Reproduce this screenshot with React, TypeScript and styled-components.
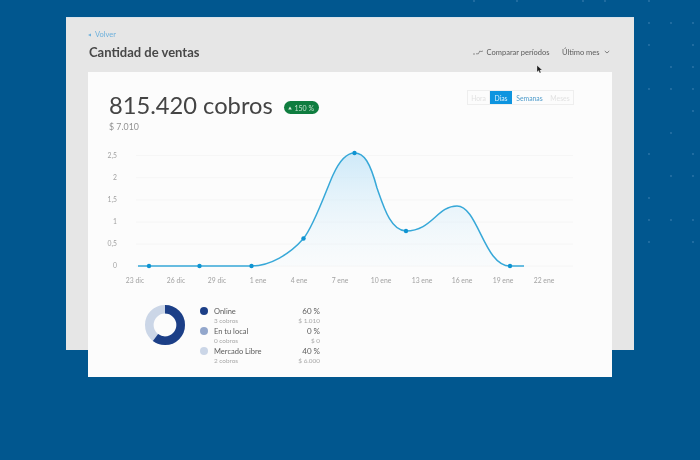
import React from "react";
import styled, { createGlobalStyle } from "styled-components";

const Global = createGlobalStyle`
  html, body { margin: 0; padding: 0; width: 700px; height: 460px; overflow: hidden; background: #01578f; }
  #root { width: 700px; height: 460px; }
  * { box-sizing: border-box; }
`;

const Page = styled.div`
  position: relative;
  width: 700px;
  height: 460px;
  background: #01578f;
  padding: 17px 66px 0;
  font-family: Lato, "Open Sans", "Liberation Sans", sans-serif;
  overflow: hidden;
  filter: blur(0.35px);
`;
const Dots = styled.svg`
  position: absolute;
  left: 0;
  top: 0;
`;
const Cursor = styled.svg`
  position: absolute;
  left: 536px;
  top: 65px;
`;
const Window = styled.div`
  position: relative;
  width: 568px;
  height: 333px;
  background: #e6e6e6;
  border-top: 1px solid #d8e2ea;
  padding: 12px 22px 0;
`;
const Back = styled.a`
  display: flex;
  align-items: center;
  gap: 4px;
  font-size: 7.5px;
  line-height: 10px;
  color: #6fb1dc;
`;
const Header = styled.div`
  display: flex;
  align-items: center;
  justify-content: space-between;
  height: 18px;
  margin-top: 3px;
  padding-left: 1px;
`;
const Title = styled.h1`
  margin: 0;
  font-size: 13px;
  font-weight: 700;
  color: #484848;
`;
const Actions = styled.div`
  display: flex;
  align-items: center;
  padding-right: 2.5px;
  font-size: 7.5px;
  color: #5c5c5c;
`;
const Compare = styled.span`
  display: flex;
  align-items: center;
  gap: 4px;
  margin-right: 12.5px;
`;
const Period = styled.span`
  display: flex;
  align-items: center;
  gap: 4px;
`;
const Card = styled.div`
  width: 524px;
  height: 305px;
  margin-top: 11px;
  background: #fcfcfc;
  padding: 19px 0 0;
`;
const TopRow = styled.div`
  display: flex;
  align-items: flex-start;
  justify-content: space-between;
  padding: 0 38px 0 21px;
`;
const Headline = styled.div`
  display: flex;
  align-items: center;
  gap: 11px;
  height: 28px;
`;
const BigNumber = styled.span`
  font-size: 23.7px;
  color: #444;
`;
const Badge = styled.span`
  display: flex;
  align-items: center;
  justify-content: center;
  gap: 2px;
  width: 35px;
  height: 13px;
  margin-top: 5px;
  border-radius: 7px;
  background: #0f7d3f;
  color: #bfe0cb;
  font-size: 7px;
`;
const Segments = styled.div`
  display: flex;
  height: 15px;
  border: 1px solid #eee;
  margin-top: -1px;
`;
const Segment = styled.span<{ $w: number; $state: "off" | "on" | "link" }>`
  width: ${(p) => p.$w}px;
  display: flex;
  align-items: center;
  justify-content: center;
  font-size: 6.8px;
  background: ${(p) => (p.$state === "on" ? "#0e94df" : "transparent")};
  color: ${(p) => (p.$state === "on" ? "#d6eefb" : p.$state === "link" ? "#4f9ccb" : "#e2e2e2")};
  border-right: ${(p) => (p.$state === "off" ? "1px solid #f0f0f0" : "0")};
  &:last-child { border-right: 0; }
`;
const Amount = styled.div`
  padding-left: 21px;
  font-size: 8.8px;
  line-height: 12px;
  margin-top: 2px;
  color: #929292;
`;
const Chart = styled.svg`
  display: block;
`;
const AxisText = styled.text`
  font-family: Lato, "Open Sans", "Liberation Sans", sans-serif;
  font-size: 6.8px;
  fill: #a2a2a2;
`;
const Summary = styled.div`
  display: flex;
  align-items: flex-start;
  padding: 15.5px 0 0 56px;
`;
const Donut = styled.svg`
  display: block;
  flex: none;
  margin-right: 14px;
`;
const Legend = styled.div`
  width: 120px;
  margin-top: 2.5px;
  display: flex;
  flex-direction: column;
  gap: 1.7px;
`;
const Row = styled.div`
  display: grid;
  grid-template-columns: 14px 1fr auto;
  grid-template-rows: 10px 8.5px;
  height: 18.5px;
  align-items: center;
`;
const Swatch = styled.span<{ $c: string }>`
  width: 8px;
  height: 8px;
  border-radius: 50%;
  background: ${(p) => p.$c};
`;
const Name = styled.span`
  font-size: 7.5px;
  color: #5c5c5c;
`;
const Pct = styled.span`
  font-size: 8px;
  text-align: right;
  color: #5c5c5c;
`;
const Sub = styled.span`
  grid-column: 2;
  font-size: 6.4px;
  color: #a8a8a8;
`;
const SubAmount = styled.span`
  font-size: 6.4px;
  text-align: right;
  color: #a8a8a8;
`;

const dots: [number, number][] = [
  [474, 1], [517, 1], [583, 1], [605, 1], [649, 1],
  [649, 23], [671, 23], [693, 23],
  [649, 45], [693, 45],
  [671, 67], [693, 67],
  [649, 89], [671, 89], [693, 89],
  [693, 111],
  [671, 133],
  [649, 154], [693, 154],
  [671, 176], [693, 176],
  [649, 198],
  [649, 220], [671, 220], [693, 220],
  [649, 242], [693, 242],
];

// Chart drawing uses page coordinates shifted by the chart's own origin
const ox = 88;
const oy = 133;
const T = (x: number, y: number) => `${x - ox} ${y - oy}`;
const curve = [
  `C${T(270, 266)} ${T(290, 254)} ${T(303.5, 238.5)}`,
  `C${T(314, 226)} ${T(327, 188)} ${T(333, 175)}`,
  `C${T(338, 164)} ${T(345, 153)} ${T(354.5, 153)}`,
  `C${T(364, 153)} ${T(370, 162)} ${T(377, 188)}`,
  `C${T(384, 208)} ${T(391, 231)} ${T(406, 231)}`,
  `C${T(432, 231)} ${T(437, 206)} ${T(457, 206)}`,
  `C${T(478, 206)} ${T(484, 266)} ${T(510, 266)}`,
].join(" ");
const line = `M${T(138, 266)} L${T(251.5, 266)} ${curve} L${T(524, 266)}`;
const area = `M${T(251.5, 266)} ${curve} Z`;

const yTicks = [
  ["2,5", 155.5], ["2", 177.7], ["1,5", 199.8], ["1", 222], ["0,5", 244], ["0", 266],
] as const;
const xTicks = [
  ["23 dic", 135], ["26 dic", 176], ["29 dic", 217], ["1 ene", 258], ["4 ene", 299], ["7 ene", 340],
  ["10 ene", 381], ["13 ene", 422], ["16 ene", 462], ["19 ene", 503], ["22 ene", 544],
] as const;
const points: [number, number][] = [
  [149, 266], [199.5, 266], [251.5, 266], [303.5, 238.5], [354.5, 153], [406, 231], [510, 266],
];

const legend = [
  { c: "#1c3f87", n: "Online", p: "60 %", s: "3 cobros", a: "$ 1.010" },
  { c: "#93a7cc", n: "En tu local", p: "0 %", s: "0 cobros", a: "$ 0" },
  { c: "#cbd6e7", n: "Mercado Libre", p: "40 %", s: "2 cobros", a: "$ 6.000" },
];

const R = 15.7;
const C = 2 * Math.PI * R;

export default function App() {
  return (
    <Page>
      <Global />
      <Dots width="700" height="460">
        {dots.map(([x, y]) => (
          <circle key={`${x}-${y}`} cx={x} cy={y} r="0.9" fill="#2f77a8" />
        ))}
      </Dots>
      <Window>
        <Back>
          <svg width="3" height="4" viewBox="0 0 3 4"><path d="M3 .4v3.2L0 2z" fill="#6fb1dc" /></svg>
          Volver
        </Back>
        <Header>
          <Title>Cantidad de ventas</Title>
          <Actions>
            <Compare>
              <svg width="10" height="6" viewBox="0 0 10 6" fill="none" stroke="#777" strokeWidth="0.8">
                <path d="M0 5h2M3 4.8h2.4L6.8 2 8 2.6 10 2" />
              </svg>
              Comparar períodos
            </Compare>
            <Period>
              Último mes
              <svg width="6" height="4" viewBox="0 0 6 4" fill="none" stroke="#666" strokeWidth="0.8">
                <path d="M.8 1l2.2 2 2.2-2" />
              </svg>
            </Period>
          </Actions>
        </Header>
        <Card>
          <TopRow>
            <Headline>
              <BigNumber>815.420 cobros</BigNumber>
              <Badge>
                <svg width="4" height="4" viewBox="0 0 4 4"><path d="M2 .4L3.8 3.6H.2z" fill="#d5eadc" /></svg>
                150 %
              </Badge>
            </Headline>
            <Segments>
              <Segment $w={22} $state="off">Hora</Segment>
              <Segment $w={22} $state="on">Días</Segment>
              <Segment $w={35} $state="link">Semanas</Segment>
              <Segment $w={26} $state="off">Meses</Segment>
            </Segments>
          </TopRow>
          <Amount>$ 7.010</Amount>
          <Chart width="524" height="155" viewBox="0 0 524 155">
            <defs>
              <linearGradient id="fill" x1="0" y1="0" x2="0" y2="1">
                <stop offset="0" stopColor="#bfe3f7" stopOpacity="0.75" />
                <stop offset="1" stopColor="#e8f5fc" stopOpacity="0.15" />
              </linearGradient>
            </defs>
            {yTicks.map(([l, y]) => (
              <line key={l} x1={136 - ox} x2={573 - ox} y1={y - oy} y2={y - oy} stroke="#f4f4f4" strokeWidth="0.8" />
            ))}
            <path d={area} fill="url(#fill)" />
            <path d={line} fill="none" stroke="#37a8d8" strokeWidth="1.5" />
            {points.map(([x, y]) => (
              <circle key={x} cx={x - ox} cy={y - oy} r="2.2" fill="#0f94d2" />
            ))}
            {yTicks.map(([l, y]) => (
              <AxisText key={l} x={117 - ox} y={y - oy + 2.4} textAnchor="end">{l}</AxisText>
            ))}
            {xTicks.map(([l, x]) => (
              <AxisText key={l} x={x - ox} y={283 - oy} textAnchor="middle">{l}</AxisText>
            ))}
          </Chart>
          <Summary>
            <Donut width="42" height="42" viewBox="0 0 42 42">
              <circle cx="21" cy="21" r={R} fill="none" stroke="#cbd6e7" strokeWidth="8.6" />
              <circle
                cx="21" cy="21" r={R} fill="none" stroke="#1c3f87" strokeWidth="8.6"
                strokeDasharray={`${C * 0.6} ${C}`}
                transform="rotate(-90 21 21)"
              />
            </Donut>
            <Legend>
              {legend.map((l) => (
                <Row key={l.n}>
                  <Swatch $c={l.c} />
                  <Name>{l.n}</Name>
                  <Pct>{l.p}</Pct>
                  <Sub>{l.s}</Sub>
                  <SubAmount>{l.a}</SubAmount>
                </Row>
              ))}
            </Legend>
          </Summary>
        </Card>
      </Window>
      <Cursor width="7" height="9" viewBox="0 0 8 11">
        <path d="M1 0.5v8l2-1.8 1.3 3 1.4-.6-1.3-2.9h2.7z" fill="#1a1a1a" stroke="#fff" strokeWidth="0.3" />
      </Cursor>
    </Page>
  );
}
